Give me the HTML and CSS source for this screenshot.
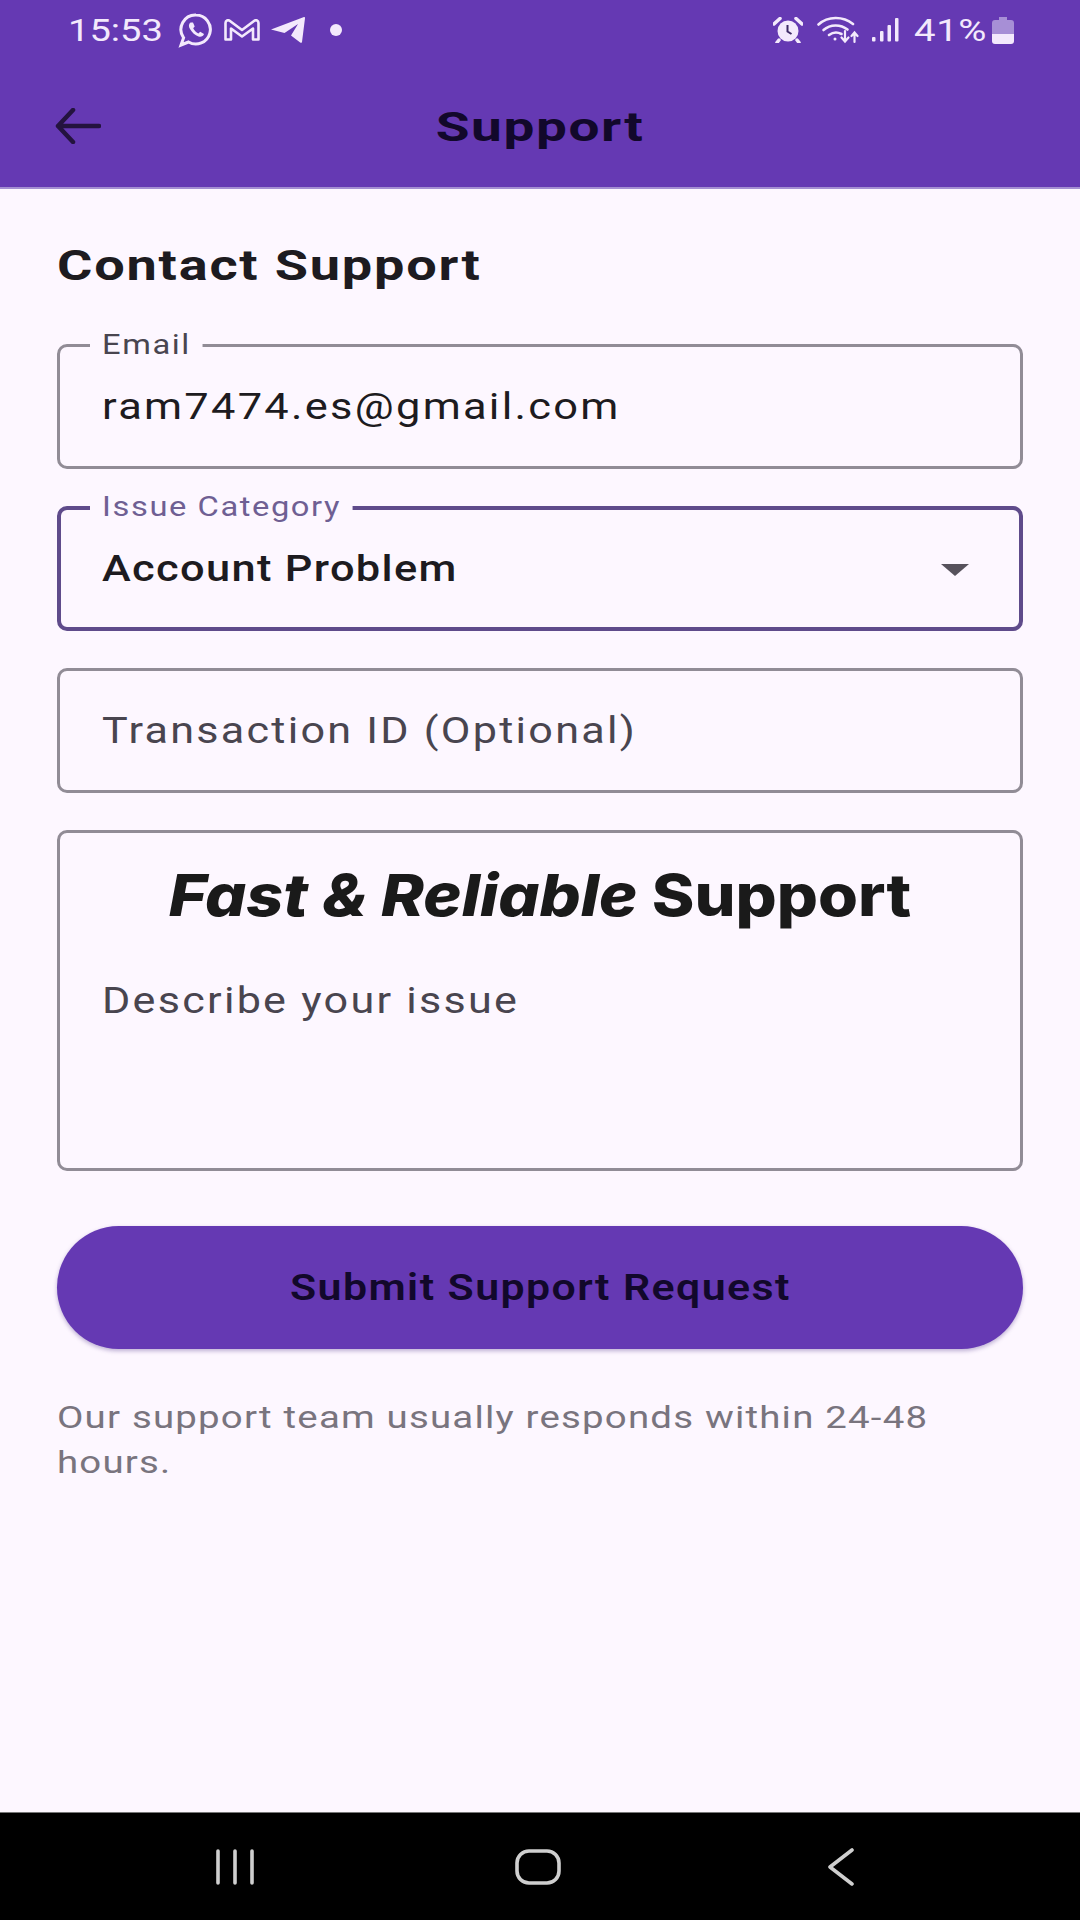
FILE: index.html
```html
<!DOCTYPE html>
<html lang="en">
<head>
    <meta charset="UTF-8">
    <meta name="viewport" content="width=device-width, initial-scale=1.0">
    <title>Support</title>
    <link rel="stylesheet" href="styles.css">
</head>
<body>
    <header class="app-header">
        <div class="status-bar">
            <div class="status-left">
                <span class="clock">15:53</span>
                <svg class="icon-whatsapp" viewBox="0 0 36 36" width="36" height="36" fill="none" stroke="currentColor" stroke-width="3">
                    <path d="M18 3a14.5 14.5 0 1 1-7.5 27L3 33l2.6-7.2A14.5 14.5 0 0 1 18 3z"/>
                    <path d="M12.5 10.500c-2 1.500-2 4 -.5 6.500 2.200 3.800 5 6.300 8.500 7.500 2.500.8 4.800-.3 5.500-2.500l-3.800-2.200-1.800 1.700c-2.300-1-4.200-3-5.200-5.200l1.500-1.800-1.700-4z" fill="currentColor" stroke="none"/>
                </svg>
                <svg class="icon-gmail" viewBox="0 0 36 22" width="36" height="22" fill="none" stroke="currentColor" stroke-width="2.600" stroke-linejoin="round">
                    <path d="M1.500 20.500V4c0-2.500 2.500-3.500 4.500-2l12 9 12-9c2-1.500 4.500-.5 4.500 2v16.500H29V9.500l-11 8-11-8v11z"/>
                </svg>
                <svg class="icon-telegram" viewBox="0 0 34 26" width="34" height="26" fill="currentColor">
                    <path d="M0 12.500 33 0c.8 0 1 .6 1 1.200L31 25c-.2 1-1.200 1-1.800.6L20 18.500 27 7 13.500 16z"/>
                </svg>
                <span class="status-dot"></span>
            </div>
            <div class="status-right">
                <svg class="icon-alarm" viewBox="0 0 30 26" width="30" height="26">
                    <circle cx="15" cy="14" r="10.500" fill="currentColor"/>
                    <path d="M1 7 7 1.500M29 7 23 1.500M6 23l-2 2.500M24 23l2 2.500" stroke="currentColor" stroke-width="3.500" stroke-linecap="round"/>
                    <path d="M14.500 8v6.500l4 2.500" fill="none" stroke="#3d2a66" stroke-width="2"/>
                </svg>
                <svg class="icon-wifi" viewBox="0 0 42 28" width="42" height="28" fill="none" stroke="currentColor" stroke-width="2.600" stroke-linecap="round">
                    <path d="M1.500 8.500C11 0 26 0 36 8"/>
                    <path d="M6.500 14c7-6 17-6 24-.5"/>
                    <path d="M12 19c4-3 8.500-3.200 12.500-1"/>
                    <circle cx="18" cy="23" r="1.500" fill="currentColor" stroke="none"/>
                    <path d="M28 15v10M24.500 21.500 28 25.500l3.500-4" stroke-width="2.200"/>
                    <path d="M37.500 26V17M34.500 20l3-3.500 3 3.500" stroke-width="2.200"/>
                </svg>
                <svg class="icon-signal" viewBox="0 0 27 24" width="27" height="24" fill="currentColor">
                    <rect x="0" y="19" width="3.500" height="4.500" rx="1"/>
                    <rect x="8" y="13" width="3.500" height="10.500" rx="1"/>
                    <rect x="15.500" y="7" width="3.500" height="16.500" rx="1"/>
                    <rect x="23" y="0" width="3.500" height="23.500" rx="1"/>
                </svg>
                <span class="battery-text">41%</span>
                <svg class="icon-battery" viewBox="0 0 22 27" width="22" height="27">
                    <path d="M7 0h8v3h4a3 3 0 0 1 3 3v11H0V6a3 3 0 0 1 3-3h4z" fill="#a78fd6"/>
                    <path d="M0 17h22v7a3 3 0 0 1-3 3H3a3 3 0 0 1-3-3z" fill="currentColor"/>
                </svg>
            </div>
        </div>
        <div class="toolbar">
            <svg class="back-arrow" viewBox="0 0 46 36" width="46" height="36" fill="none" stroke="#24133f" stroke-width="4.500" stroke-linecap="round" stroke-linejoin="round">
                <path d="M44 18H3M18 2 3 18l15 16"/>
            </svg>
            <h1 class="toolbar-title">Support</h1>
        </div>
    </header>

    <main class="content">
        <h2 class="section-title">Contact Support</h2>
        <form class="support-form">
            <div class="field">
                <span class="field-label">Email</span>
                <span class="field-value">ram7474.es@gmail.com</span>
            </div>
            <div class="field field-focused">
                <span class="field-label">Issue Category</span>
                <span class="field-value field-selected">Account Problem</span>
                <span class="dropdown-caret"></span>
            </div>
            <div class="field">
                <span class="field-hint">Transaction ID (Optional)</span>
            </div>
            <div class="field field-multi">
                <div class="promo-title"><em>Fast &amp; Reliable</em> Support</div>
                <span class="field-hint">Describe your issue</span>
            </div>
            <button type="button" class="submit-btn"><span class="submit-label">Submit Support Request</span></button>
        </form>
        <p class="help-text">Our support team usually responds within 24-48 hours.</p>
    </main>

    <nav class="nav-bar">
        <svg viewBox="0 0 38 36" width="38" height="36" stroke="#cfcfcf" stroke-width="3.600" stroke-linecap="round">
            <path d="M2 2v32M19 2v32M36 2v32"/>
        </svg>
        <svg viewBox="0 0 46 36" width="46" height="36" fill="none" stroke="#cfcfcf" stroke-width="3.600">
            <rect x="2" y="2" width="42" height="32" rx="12"/>
        </svg>
        <svg viewBox="0 0 26 38" width="26" height="38" fill="none" stroke="#cfcfcf" stroke-width="3.600" stroke-linecap="round" stroke-linejoin="round">
            <path d="M24 2 2 19l22 17"/>
        </svg>
    </nav>
</body>
</html>
```

FILE: styles.css
```css
* {
    box-sizing: border-box;
}
body {
    margin: 0;
    width: 1080px;
    height: 1920px;
    display: flex;
    flex-direction: column;
    font-family: Roboto, Arial, sans-serif;
    background-color: #fdf7ff;
    color: #1d1b20;
    overflow: hidden;
}
/* the text in this screen is wider than plain Roboto */
.clock,
.battery-text,
.section-title,
.field-label,
.field-value,
.field-hint,
.help-text {
    transform-origin: left center;
}
.app-header {
    height: 189px;
    background-color: #6539b3;
    border-bottom: 2px solid #a48fd2;
}
.status-bar {
    height: 60px;
    padding: 14px 66px 0 68px;
    display: flex;
    justify-content: space-between;
    color: #f3e9fc;
}
.status-left,
.status-right {
    display: flex;
    align-items: center;
    height: 32px;
}
.clock {
    font-size: 32px;
    width: 110px;
    transform: scaleX(1.19);
}
.icon-gmail {
    margin-left: 10px;
}
.icon-telegram {
    margin-left: 11px;
}
.status-dot {
    width: 12px;
    height: 12px;
    margin-left: 25px;
    border-radius: 50%;
    background-color: #f3e9fc;
}
.icon-wifi {
    margin-left: 14px;
}
.icon-signal {
    margin-left: 13px;
}
.battery-text {
    margin-left: 15px;
    font-size: 32px;
    letter-spacing: 0.5px;
    width: 78px;
    transform: scaleX(1.2);
}
.toolbar {
    height: 127px;
    padding-left: 55px;
    position: relative;
    display: flex;
    align-items: center;
}
.back-arrow {
    margin-top: 5px;
}
.toolbar-title {
    position: absolute;
    left: 340px;
    right: 340px;
    margin: 0;
    top: 42px;
    text-align: center;
    font-size: 41px;
    line-height: 50px;
    font-weight: 700;
    letter-spacing: 1.2px;
    color: #12082b;
    transform: scaleX(1.34);
}
.content {
    flex: 1;
    padding: 52px 57px 0;
}
.section-title {
    width: fit-content;
    margin: 0 0 53px;
    font-size: 42px;
    line-height: 50px;
    font-weight: 700;
    letter-spacing: 1.4px;
    color: #1d1b20;
    transform: scaleX(1.287);
}
.support-form {
    display: flex;
    flex-direction: column;
    gap: 37px;
}
.field {
    position: relative;
    height: 125px;
    padding: 0 42px;
    display: flex;
    align-items: center;
    border: 3px solid #918c96;
    border-radius: 10px;
}
.field-focused {
    border: 4px solid #5f4b8b;
    padding: 0 41px;
}
.field-label {
    position: absolute;
    top: -16px;
    left: 30px;
    padding: 0 10px;
    font-size: 27px;
    line-height: 28px;
    letter-spacing: 1.3px;
    background-color: #fdf7ff;
    color: #49454f;
    transform: scaleX(1.21);
}
.field-focused .field-label {
    top: -17px;
    left: 29px;
    color: #6f5f93;
}
.field-value {
    font-size: 36px;
    letter-spacing: 1.9px;
    color: #1d1b20;
    transform: scaleX(1.205);
}
.field-selected {
    font-weight: 500;
    letter-spacing: 1.1px;
}
.field-hint {
    font-size: 36px;
    letter-spacing: 1.9px;
    color: #49454f;
    transform: scaleX(1.197);
}
.dropdown-caret {
    position: absolute;
    right: 50px;
    top: 54px;
    border-left: 14px solid transparent;
    border-right: 14px solid transparent;
    border-top: 12px solid #57525c;
}
.field-multi {
    height: 341px;
    flex-direction: column;
    align-items: flex-start;
    padding-top: 23px;
}
.promo-title {
    width: 760px;
    align-self: center;
    text-align: center;
    font-family: Inter, Arial, sans-serif;
    font-size: 58px;
    line-height: 78px;
    font-weight: 800;
    color: #1a1a1a;
    transform: scaleX(1.115);
}
.promo-title em {
    font-style: italic;
}
.field-multi .field-hint {
    margin-top: 46px;
}
.submit-btn {
    margin-top: 18px;
    height: 123px;
    border: none;
    border-radius: 62px;
    background-color: #6539b3;
    box-shadow: 0 2px 4px rgba(70, 40, 130, 0.35);
    font-family: inherit;
    font-size: 36px;
    font-weight: 600;
    letter-spacing: 1.2px;
    color: #12082b;
}
.submit-label {
    display: inline-block;
    transform: scaleX(1.19);
}
.help-text {
    margin: 46px 0 0;
    max-width: 805px;
    font-size: 32px;
    line-height: 45px;
    letter-spacing: 1px;
    color: #79747e;
    transform: scaleX(1.2);
}
.nav-bar {
    height: 108px;
    padding: 0 4px 0 0;
    display: grid;
    grid-template-columns: repeat(3, 303px);
    justify-content: center;
    justify-items: center;
    align-items: center;
    background-color: #000;
    border-top: 1px solid #777;
}
```
